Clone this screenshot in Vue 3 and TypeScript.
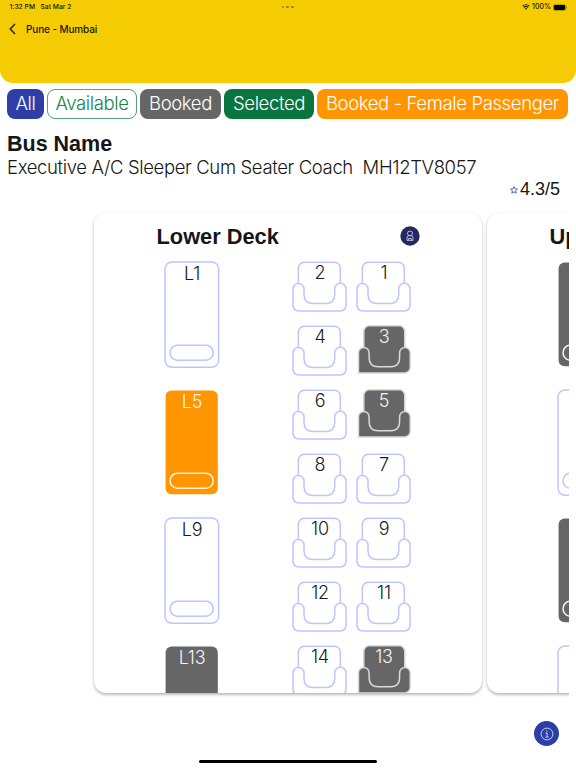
<script setup lang="ts">
type Status = 'free' | 'booked' | 'female'
interface Place { label: string; status: Status }
interface Row { berth: Place; seats: Place[] }

const filters = [
  { label: 'All', kind: 'all' },
  { label: 'Available', kind: 'available' },
  { label: 'Booked', kind: 'booked' },
  { label: 'Selected', kind: 'selected' },
  { label: 'Booked - Female Passenger', kind: 'female' },
]

const booked = [3, 5, 13]
const seat = (n: number): Place => ({ label: String(n), status: booked.includes(n) ? 'booked' : 'free' })
const berth = (label: string, status: Status): Place => ({ label, status })

const lower: Row[] = [
  { berth: berth('L1', 'free'), seats: [2, 1, 4, 3].map(seat) },
  { berth: berth('L5', 'female'), seats: [6, 5, 8, 7].map(seat) },
  { berth: berth('L9', 'free'), seats: [10, 9, 12, 11].map(seat) },
  { berth: berth('L13', 'booked'), seats: [14, 13].map(seat) },
]
const upper: Row[] = (['booked', 'free', 'booked', 'free'] as Status[]).map(s => ({ berth: berth('', s), seats: [] }))
const decks = [
  { title: 'Lower Deck', driver: true, rows: lower },
  { title: 'Upper Deck', driver: false, rows: upper },
]
</script>

<template>
  <div class="screen">
    <header class="header">
      <div class="status">
        <span class="time">1:32 PM</span>
        <span class="date">Sat Mar 2</span>
        <span class="dots"><i></i><i></i><i></i></span>
        <svg class="wifi" viewBox="0 0 16 12" width="8" height="6">
          <path d="M1.2 4.3a9.8 9.8 0 0 1 13.6 0M3.7 7a6.2 6.2 0 0 1 8.6 0" fill="none" stroke="#231d00" stroke-width="2.3" />
          <path d="M8 11.6 5.4 9a3.8 3.8 0 0 1 5.2 0z" fill="#231d00" />
        </svg>
        <span class="percent">100%</span>
        <svg class="battery" viewBox="0 0 14 7" width="14" height="7">
          <rect x=".4" y=".4" width="12.2" height="6.1" rx="1.7" fill="none" stroke="#8f7a00" stroke-width=".6" />
          <rect x=".9" y=".9" width="11.200" height="5.100" rx="1.2" />
          <path d="M13.400 2.500v2" stroke="#776500" stroke-width=".8" />
        </svg>
      </div>
      <div class="nav">
        <svg viewBox="0 0 7 12" width="7" height="12"><path d="M6 1 1.2 6 6 11" fill="none" stroke="#181400" stroke-width="1.3" /></svg>
        <span>Pune - Mumbai</span>
      </div>
    </header>

    <div class="filters">
      <button v-for="f in filters" :key="f.kind" class="chip" :class="f.kind">{{ f.label }}</button>
    </div>

    <section class="bus">
      <h1>Bus Name</h1>
      <p class="desc">Executive A/C Sleeper Cum Seater Coach&nbsp; MH12TV8057</p>
      <div class="rating">
        <svg viewBox="0 0 16 16" width="8" height="8"><path d="M8 1.2 10 5.7l4.9.5-3.7 3.2 1.1 4.9L8 11.8l-4.3 2.5 1.1-4.9L1.1 6.2 6 5.7z" fill="none" stroke="#2d3fa7" stroke-width="1.6" /></svg>
        <span>4.3/5</span>
      </div>
    </section>

    <div class="decks">
      <article v-for="deck in decks" :key="deck.title" class="deck">
        <div class="deck-head">
          <h2>{{ deck.title }}</h2>
          <svg v-if="deck.driver" viewBox="0 0 20 20" width="20" height="20">
            <circle cx="10" cy="10" r="9.7" fill="#242963" />
            <g fill="none" stroke="#c9cbe6" stroke-width=".9">
              <rect x="7.700" y="5.300" width="4.600" height="4.300" rx="1.500" />
              <path d="M7 14.400v-2.500q0-2.300 2-2.300h2q2 0 2 2.300v2.500zM8.600 14v-1.500h2.800V14" />
            </g>
          </svg>
        </div>
        <div v-for="(row, i) in deck.rows" :key="i" class="row">
          <div class="berth" :class="row.berth.status">
            <svg viewBox="0 0 56 108" width="56" height="108">
              <rect v-if="row.berth.status === 'free'" class="bed" x="1" y="1" width="53.600" height="105.300" rx="7" />
              <rect v-else class="bed" x="1.600" y="1.600" width="52.200" height="103.600" rx="6" />
              <rect class="pillow" x="6" y="84.200" width="43.300" height="15" rx="7.500" />
            </svg>
            <span class="label">{{ row.berth.label }}</span>
          </div>
          <div class="seats">
            <div v-for="s in row.seats" :key="s.label" class="seat" :class="s.status">
              <svg v-if="s.status === 'free'" viewBox="0 0 56 52" width="56" height="52">
                <path d="M6.3 23V7.300a6 6 0 0 1 6-6h30a6 6 0 0 1 6 6V23" />
                <path d="M1 28a5.500 5.500 0 0 1 11 0v5.500q0 9 9 9h12.700q9 0 9-9V28A5.600 5.600 0 0 1 54 28v16.500a5.500 5.500 0 0 1-5.500 5.500h-42A5.500 5.500 0 0 1 1 44.500z" />
              </svg>
              <svg v-else viewBox="0 0 56 52" width="56" height="52">
                <path d="M7.800 45V6.300a5.500 5.500 0 0 1 5.500-5.500h30a5.500 5.500 0 0 1 5.500 5.500V45z" />
                <path d="M2.500 27.700a5.300 5.300 0 0 1 10.600 0v5q0 9 9 9h12.500q9 0 9-9v-5a5.300 5.300 0 0 1 10.600 0V42.500a5.500 5.500 0 0 1-5.500 5.500H2.500z" />
              </svg>
              <span class="label">{{ s.label }}</span>
            </div>
          </div>
        </div>
      </article>
    </div>

    <footer class="footer">
      <button class="info">
        <svg viewBox="0 0 14 14" width="14" height="14" fill="none" stroke="#d5daf5" stroke-width=".9">
          <circle cx="7" cy="7" r="5.900" />
          <path d="M5.500 6h1.600v4M5.300 10.100h3.500" />
          <path d="M6.300 4h1.200" stroke-width="1.200" />
        </svg>
      </button>
      <div class="home"></div>
    </footer>
  </div>
</template>

<style>
body { margin: 0; background: #fff; }
</style>

<style scoped>
* { box-sizing: border-box; }
.screen {
  width: 576px; height: 768px; overflow: hidden; background: #fff; color: #161616;
  font-family: "Liberation Sans", Arial, sans-serif;
  display: flex; flex-direction: column;
}
h1, h2, p { margin: 0; }
button { border: 0; padding: 0; font: inherit; }
.header { height: 83px; flex: none; background: #f5cc03; border-radius: 0 0 13px 13px; color: #181400; }
.status {
  height: 14px; padding: 0 9px 0 9.500px; display: grid; align-items: center;
  grid-template-columns: 31px 241px 1fr auto auto auto;
  font: 500 6.700px/14px Inter, sans-serif; letter-spacing: .04px;
}
.dots { display: flex; gap: 2px; }
.dots i { width: 2.700px; height: 2.700px; border-radius: 50%; background: #9b8206; }
.percent { margin: 0 2px 0 2px; font-size: 7px; }
.nav { display: flex; align-items: center; gap: 10px; padding-left: 9px; height: 30px; font: 500 10px/30px Inter, sans-serif; letter-spacing: -.12px; }
.filters { display: flex; gap: 3px; padding: 6px 0 0 7px; height: 36px; flex: none; }
.chip {
  height: 30px; border-radius: 8px; color: #fff; border: 1px solid transparent;
  font: 300 18.500px/26px Inter, sans-serif; letter-spacing: -.37px; padding-bottom: 2px;
  white-space: nowrap; flex: none; text-align: center;
}
.all { width: 37px; background: #2d3fa7; }
.available { width: 90px; background: #fff; color: #16854a; border-color: #50a477; }
.chip.booked { width: 81px; background: #666; }
.selected { width: 90px; background: #0b7540; }
.chip.female { width: 251px; background: #ff9500; }
.bus { height: 92px; flex: none; padding: 12px 16px 0 7px; }
h1 { font-size: 21.500px; line-height: 26px; }
.desc { font: 300 18.500px/20px Inter, sans-serif; letter-spacing: -.36px; white-space: nowrap; }
.rating { display: flex; justify-content: flex-end; align-items: center; gap: 2px; height: 24px; font-size: 18px; }
.rating svg { margin-top: 2px; }
.decks { display: flex; gap: 5px; width: 569px; height: 494px; padding: 2px 0 0 94px; overflow: hidden; flex: none; }
.deck {
  width: 388px; height: 480px; flex: none; overflow: hidden; border-radius: 12px; background: #fff;
  box-shadow: 0 2px 3px rgba(0, 0, 0, .25), 0 0 2px rgba(0, 0, 0, .1);
}
.deck-head { height: 48px; padding: 13px 62px 0 62.500px; display: flex; justify-content: space-between; align-items: flex-start; }
h2 { font-size: 21.800px; line-height: 21px; white-space: nowrap; }
.row { height: 127.900px; padding-left: 70px; display: flex; gap: 72px; }
.berth { width: 56px; height: 108px; position: relative; flex: none; }
.berth svg { display: block; }
.bed, .pillow { fill: #fff; stroke: #bdc5ff; stroke-width: 1.500px; }
.booked .bed { fill: #666; stroke: none; }
.female .bed { fill: #ff9500; stroke: none; }
.booked .pillow, .female .pillow { fill: none; stroke: #fff3e4; }
.label { position: absolute; left: 0; right: 0; top: 1px; text-align: center; font: 300 18px/22px Inter, sans-serif; letter-spacing: -.2px; color: #1b1b1b; }
.berth .label { top: 2px; }
.booked .label, .female .label { color: #f4f4f4; }
.seats { display: grid; grid-template-columns: 56px 56px; grid-auto-rows: 52px; column-gap: 8px; row-gap: 11.900px; align-content: start; }
.seat { position: relative; }
.seat svg { display: block; fill: #fff; stroke: #bdc5ff; stroke-width: 1.500px; }
.seat.booked svg { fill: #666; stroke: #d9d9d9; }
.footer { flex: 1; position: relative; }
.info {
  position: absolute; right: 17px; top: 16px; width: 25px; height: 25px; border-radius: 50%;
  background: #2d3fa7; display: grid; place-items: center;
}
.home { position: absolute; left: 199px; bottom: 5px; width: 178px; height: 3px; border-radius: 2px; background: #000; }
</style>
